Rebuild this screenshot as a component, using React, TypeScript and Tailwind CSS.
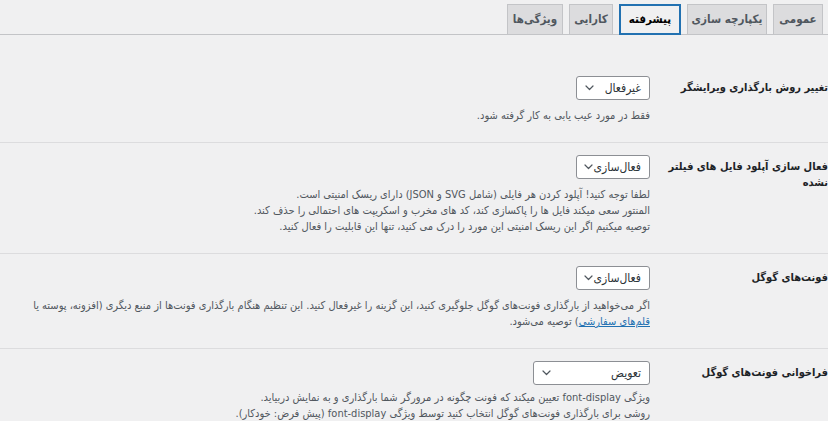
import React from "react";

const tabs = [
  { label: "عمومی", w: "w-[50px]" },
  { label: "یکپارچه سازی", w: "w-[80px]" },
  { label: "پیشرفته", w: "w-[62px]", active: true },
  { label: "کارایی", w: "w-[44px]" },
  { label: "ویژگی‌ها", w: "w-[56px]" },
];

function Chevron() {
  return (
    <svg width="9" height="6" viewBox="0 0 9 6" fill="none" className="shrink-0">
      <path d="M1 1l3.5 3.5L8 1" stroke="#50575e" strokeWidth="1.2" strokeLinecap="round" strokeLinejoin="round" />
    </svg>
  );
}

function Select({ value, width }: { value: string; width: string }) {
  return (
    <div
      className={`flex h-[24px] items-center justify-between rounded-[3px] border border-[#8c8f94] bg-white pl-[8px] pr-[8px] text-[12px] text-[#2c3338] ${width}`}
    >
      <span className="whitespace-nowrap">{value}</span>
      <Chevron />
    </div>
  );
}

function Row({
  label,
  select,
  first,
  descGap = "mt-[8px]",
  children,
}: {
  label: React.ReactNode;
  select: React.ReactNode;
  first?: boolean;
  descGap?: string;
  children: React.ReactNode;
}) {
  return (
    <div className={`flex pb-[18px] ${first ? "pt-[41px]" : "border-t border-[#dcdcde] pt-[12px]"}`}>
      <div className="w-[178px] shrink-0 whitespace-nowrap pl-[12px] pt-[4px] text-[11px] font-bold leading-[16px] text-[#1d2327]">
        {label}
      </div>
      <div className="min-w-0 flex-1">
        {select}
        <div className={`${descGap} whitespace-nowrap text-[11px] leading-[16px] text-[#50575e]`}>{children}</div>
      </div>
    </div>
  );
}

export default function App() {
  return (
    <div
      dir="rtl"
      className="h-[421px] w-[828px] overflow-hidden bg-[#f0f0f1] font-['DejaVu_Sans_Condensed','DejaVu_Sans',sans-serif]"
    >
      {/* Tabs */}
      <nav className="flex items-end gap-[6px] border-b border-[#c3c4c7] pr-[5px] pt-[4px]">
        {tabs.map((t) => (
          <div
            key={t.label}
            className={`-mb-px flex h-[31px] items-center justify-center whitespace-nowrap text-[11.5px] font-bold ${t.w} ${
              t.active
                ? "border-2 border-[#2271b1] bg-[#f0f0f1] text-[#000]"
                : "border border-[#c3c4c7] bg-[#dcdcde] text-[#50575e]"
            }`}
          >
            {t.label}
          </div>
        ))}
      </nav>

      <Row first label="تغییر روش بارگذاری ویرایشگر" select={<Select value="غیرفعال" width="w-[74px]" />}>
        فقط در مورد عیب یابی به کار گرفته شود.
      </Row>

      <Row
        label={
          <>
            فعال سازی آپلود فایل های فیلتر
            <br />
            نشده
          </>
        }
        select={<Select value="فعال‌سازی" width="w-[74px]" />}
      >
        لطفا توجه کنید! آپلود کردن هر فایلی (شامل SVG و JSON) دارای ریسک امنیتی است.
        <br />
        المنتور سعی میکند فایل ها را پاکسازی کند، کد های مخرب و اسکریپت های احتمالی را حذف کند.
        <br />
        توصیه میکنیم اگر این ریسک امنیتی این مورد را درک می کنید، تنها این قابلیت را فعال کنید.
      </Row>

      <Row label="فونت‌های گوگل" select={<Select value="فعال‌سازی" width="w-[74px]" />}>
        اگر می‌خواهید از بارگذاری فونت‌های گوگل جلوگیری کنید، این گزینه را غیرفعال کنید. این تنظیم هنگام بارگذاری
        فونت‌ها از منبع دیگری (افزونه، پوسته یا
        <br />
        <a className="text-[#2271b1] underline">قلم‌های سفارشی</a>) توصیه می‌شود.
      </Row>

      <Row
        label="فراخوانی فونت‌های گوگل"
        descGap="mt-[5px]"
        select={<Select value="تعویض" width="w-[117px]" />}
      >
        ویژگی font-display تعیین میکند که فونت چگونه در مرورگر شما بارگذاری و به نمایش دربیاید.
        <br />
        روشی برای بارگذاری فونت‌های گوگل انتخاب کنید توسط ویژگی font-display (پیش فرض: خودکار).
      </Row>
    </div>
  );
}
